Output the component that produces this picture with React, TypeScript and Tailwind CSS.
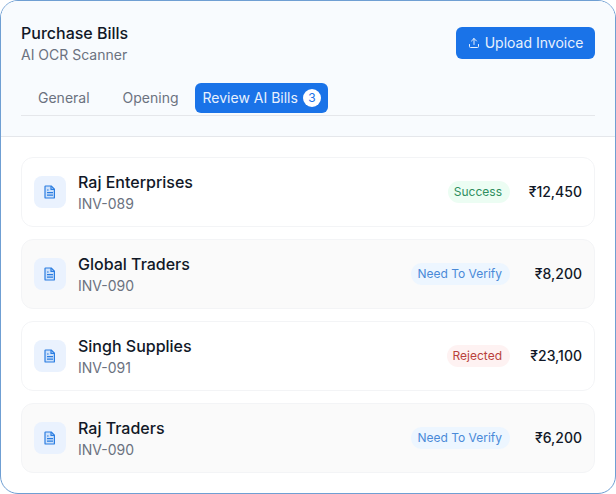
import { Upload } from 'lucide-react';

interface Bill {
  name: string;
  invoice: string;
  status: 'Success' | 'Need To Verify' | 'Rejected';
  amount: string;
}

const bills: Bill[] = [
  { name: 'Raj Enterprises', invoice: 'INV-089', status: 'Success', amount: '₹12,450' },
  { name: 'Global Traders', invoice: 'INV-090', status: 'Need To Verify', amount: '₹8,200' },
  { name: 'Singh Supplies', invoice: 'INV-091', status: 'Rejected', amount: '₹23,100' },
  { name: 'Raj Traders', invoice: 'INV-090', status: 'Need To Verify', amount: '₹6,200' },
];

const statusStyles = {
  Success: 'bg-[#ecfdf3] text-[#2f8f5f]',
  'Need To Verify': 'bg-[#edf6ff] text-[#4a8ad8]',
  Rejected: 'bg-[#fef2f2] text-[#b9413c]',
};

function BillIcon() {
  return (
    <svg viewBox="0 0 12 14" className="h-[14px] w-3 text-[#2a7de1]" fill="none" stroke="currentColor" strokeWidth={1.2}>
      <path d="M1.6 1h5.6l3.2 3.2v8.2a.6.6 0 0 1-.6.6H1.6a.6.6 0 0 1-.6-.6V1.6a.6.6 0 0 1 .6-.6Z" fill="#cfe2fb" strokeLinejoin="round" />
      <path d="M7 1v3.4h3.4" strokeLinejoin="round" />
      <path d="M3 5h1.6M3 7.6h6M3 10.2h6" />
    </svg>
  );
}

function BillRow({ bill, shaded }: { bill: Bill; shaded: boolean }) {
  return (
    <div
      className={`flex h-[70px] items-center justify-between rounded-xl border border-[#f3f4f6] px-3 ${
        shaded ? 'bg-[#fafafa]' : 'bg-white'
      }`}
    >
      <div className="flex items-center gap-3">
        <div className="flex size-8 items-center justify-center rounded-lg bg-[#eaf2fe]">
          <BillIcon />
        </div>
        <div>
          <div className="text-base leading-6 font-[450] text-[#111827]">{bill.name}</div>
          <div className="text-sm leading-5 text-[#6b7280]">{bill.invoice}</div>
        </div>
      </div>
      <div className="flex items-center gap-[18px]">
        <span className={`flex h-[22px] items-center rounded-full pr-2 pl-1.5 text-xs ${statusStyles[bill.status]}`}>
          {bill.status}
        </span>
        <span className="w-[54px] text-right text-sm font-[450] text-[#111827]">{bill.amount}</span>
      </div>
    </div>
  );
}

export default function App() {
  return (
    <div className="h-[494px] w-[616px] bg-white font-['Inter',sans-serif]">
      <div className="h-full overflow-hidden rounded-[18px] border border-[#6f9fd3] bg-white">
        <div className="h-[136px] border-b border-[#e5e7eb] bg-[#f8fbfe] px-5">
          <div className="flex items-start justify-between pt-[22px]">
            <div>
              <h1 className="text-base leading-5 font-[450] text-[#111827]">Purchase Bills</h1>
              <p className="mt-0.5 text-sm leading-5 text-[#6b7280]">AI OCR Scanner</p>
            </div>
            <button
              type="button"
              className="mt-1 flex h-8 w-[139px] items-center justify-center gap-[5px] rounded-md bg-[#1a73e8] text-sm text-[#e8f1fd]"
            >
              <Upload className="size-3" strokeWidth={2} />
              Upload Invoice
            </button>
          </div>
          <div className="mt-[18px] flex h-[33px] items-start border-b border-[#e5e7eb] text-sm text-[#6b7280]">
            <span className="ml-[17px] flex h-[30px] items-center">General</span>
            <span className="ml-[33px] flex h-[30px] items-center">Opening</span>
            <span className="ml-4 flex h-[30px] items-center gap-[5px] rounded-md bg-[#1a73e8] pr-[7px] pl-2 text-[#e8f1fd]">
              Review AI Bills
              <span className="flex size-[18px] items-center justify-center rounded-full bg-white text-xs text-[#1a73e8]">
                3
              </span>
            </span>
          </div>
        </div>
        <div className="flex flex-col gap-3 px-5 pt-5">
          {bills.map((bill, i) => (
            <BillRow key={i} bill={bill} shaded={i % 2 === 1} />
          ))}
        </div>
      </div>
    </div>
  );
}
